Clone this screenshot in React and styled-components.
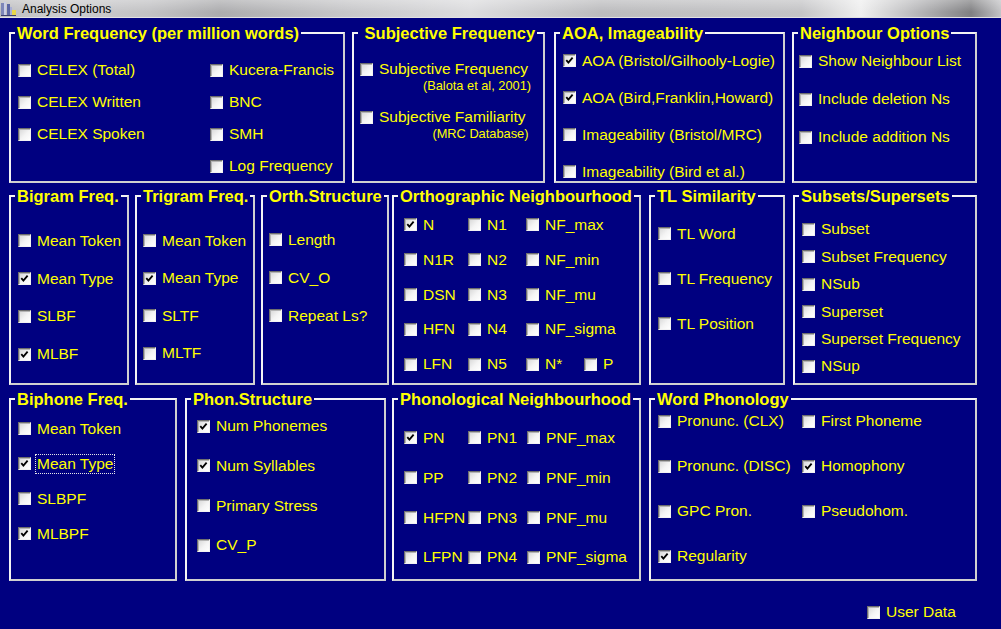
import React from 'react';
import styled, { createGlobalStyle } from 'styled-components';

const GlobalStyle = createGlobalStyle`
  html, body {
    margin: 0;
    padding: 0;
    background: #000080;
  }
  body {
    font-family: "Liberation Sans", Arial, sans-serif;
    overflow: hidden;
  }
  * { box-sizing: border-box; }
`;

const on = (label, extra) => ({ label, on: true, ...extra });

// left/width/margins follow the reference dialog, which is a fixed-size form
const rows = [
  {
    h: 151,
    mt: 14,
    groups: [
      { title: 'Word Frequency (per million words)', w: 336, ml: 0, pl: 7, first: 38, pitch: 32, cols: '192px auto',
        items: [['CELEX (Total)', 'Kucera-Francis'], ['CELEX Written', 'BNC'], ['CELEX Spoken', 'SMH'], [null, 'Log Frequency']] },
      { title: ' Subjective Frequency', w: 193, ml: 7, pl: 6, first: 44.5, pitch: 48,
        items: [
          { label: 'Subjective Frequency', sub: '(Balota et al, 2001)' },
          { label: 'Subjective Familiarity', sub: '(MRC Database)' },
        ] },
      { title: 'AOA, Imageability', w: 231, ml: 9, pl: 7, first: 28.5, pitch: 37,
        items: [on('AOA (Bristol/Gilhooly-Logie)'), on('AOA (Bird,Franklin,Howard)'), 'Imageability (Bristol/MRC)', 'Imageability (Bird et al.)'] },
      { title: 'Neighbour Options', w: 185, ml: 7, pl: 5, first: 29, pitch: 38,
        items: ['Show Neighbour List', 'Include deletion Ns', 'Include addition Ns'] },
    ],
  },
  {
    h: 190,
    mt: 12,
    groups: [
      { title: 'Bigram Freq.', w: 120, ml: 0, pl: 7, first: 46, pitch: 37.7,
        items: ['Mean Token', on('Mean Type'), 'SLBF', on('MLBF')] },
      { title: 'Trigram Freq.', w: 120, ml: 6, pl: 6, first: 46, pitch: 37.4,
        items: ['Mean Token', on('Mean Type'), 'SLTF', 'MLTF'] },
      { title: 'Orth.Structure', w: 128, ml: 6, pl: 6, first: 44.7, pitch: 38,
        items: ['Length', 'CV_O', 'Repeat Ls?'] },
      { title: 'Orthographic Neighbourhood', w: 249, ml: 3, pl: 10, first: 30, pitch: 34.8, cols: '64px 58px 58px auto',
        items: [
          [on('N'), 'N1', 'NF_max', null],
          ['N1R', 'N2', 'NF_min', null],
          ['DSN', 'N3', 'NF_mu', null],
          ['HFN', 'N4', 'NF_sigma', null],
          ['LFN', 'N5', 'N*', 'P'],
        ] },
      { title: 'TL Similarity', w: 136, ml: 8, pl: 7, first: 38.7, pitch: 45,
        items: ['TL Word', 'TL Frequency', 'TL Position'] },
      { title: 'Subsets/Supersets', w: 184, ml: 8, pl: 7, first: 34.5, pitch: 27.4,
        items: ['Subset', 'Subset Frequency', 'NSub', 'Superset', 'Superset Frequency', 'NSup'] },
    ],
  },
  {
    h: 183,
    mt: 13,
    groups: [
      { title: 'Biphone Freq.', w: 168, ml: 0, pl: 7, first: 30.7, pitch: 35,
        items: ['Mean Token', on('Mean Type', { focus: true }), 'SLBPF', on('MLBPF')] },
      { title: 'Phon.Structure', w: 201, ml: 8, pl: 10, first: 28.3, pitch: 39.7,
        items: [on('Num Phonemes'), on('Num Syllables'), 'Primary Stress', 'CV_P'] },
      { title: 'Phonological Neighbourhood', w: 249, ml: 6, pl: 10, first: 40, pitch: 39.8, cols: '64px 59px auto',
        items: [
          [on('PN'), 'PN1', 'PNF_max'],
          ['PP', 'PN2', 'PNF_min'],
          ['HFPN', 'PN3', 'PNF_mu'],
          ['LFPN', 'PN4', 'PNF_sigma'],
        ] },
      { title: 'Word Phonology', w: 328, ml: 8, pl: 7, first: 23.3, pitch: 45, cols: '144px auto',
        items: [
          ['Pronunc. (CLX)', 'First Phoneme'],
          ['Pronunc. (DISC)', on('Homophony')],
          ['GPC Pron.', 'Pseudohom.'],
          [on('Regularity'), null],
        ] },
    ],
  },
];

export default function App() {
  return (
    <>
      <GlobalStyle />
      <Dialog>
        <TitleBar>
          <AppIcon />
          <span>Analysis Options</span>
        </TitleBar>
        <Form>
          {rows.map((row, i) => (
            <GroupRow key={i} $mt={row.mt}>
              {row.groups.map((g) => (
                <Group key={g.title} $w={g.w} $h={row.h} $ml={g.ml}>
                  <Legend>{g.title}</Legend>
                  <Options
                    $mt={g.first - 10 - g.pitch / 2}
                    $pl={g.pl}
                    $pitch={g.pitch}
                    $cols={g.cols || 'auto'}
                  >
                    {g.items.flat().map((item, j) => (
                      <Choice key={j} item={item} />
                    ))}
                  </Options>
                </Group>
              ))}
            </GroupRow>
          ))}
          <Footer>
            <Choice item="User Data" />
          </Footer>
        </Form>
      </Dialog>
    </>
  );
}

function Choice({ item }) {
  if (!item) return <span />;
  const opt = typeof item === 'string' ? { label: item } : item;
  return (
    <Option>
      <Checkbox checked={opt.on} />
      {opt.sub ? (
        <Stack>
          <Caption>{opt.label}</Caption>
          <Note>{opt.sub}</Note>
        </Stack>
      ) : (
        <Caption $focus={opt.focus}>{opt.label}</Caption>
      )}
    </Option>
  );
}

function Checkbox({ checked }) {
  return (
    <Box>
      {checked && (
        <svg width="9" height="9" viewBox="0 0 9 9">
          <path d="M1.3 4.2 L3.4 6.6 L7.6 1.6" fill="none" stroke="#000" strokeWidth="1.8" />
        </svg>
      )}
    </Box>
  );
}

function AppIcon() {
  return (
    <svg width="18" height="16" viewBox="0 0 18 16">
      <rect x="1" y="2" width="3" height="13" fill="#7d86b8" />
      <rect x="4" y="1" width="2" height="14" fill="#c9cde6" />
      <rect x="7" y="3" width="3" height="12" fill="#5c66a4" />
      <rect x="10" y="6" width="2" height="9" fill="#aab0d6" />
      <rect x="12" y="9" width="4" height="6" fill="#e8d84a" />
      <rect x="1" y="14" width="15" height="1" fill="#3b3f6e" />
    </svg>
  );
}

const Dialog = styled.div`
  width: 1001px;
  height: 629px;
  background: #000080;
`;

const TitleBar = styled.header`
  height: 18px;
  display: flex;
  align-items: center;
  gap: 4px;
  border-bottom: 1px solid #e2e2e2;
  background:
    linear-gradient(180deg, rgba(255, 255, 255, 0.3) 0%, rgba(255, 255, 255, 0) 70%),
    linear-gradient(
      90deg,
      #bdbdbf 0%,
      #cdcdcf 6%,
      #c2c2c4 15%,
      #acacae 22%,
      #c6c6c8 34%,
      #dcdcde 47%,
      #bcbcbe 60%,
      #c4c4c6 80%,
      #efefef 86%,
      #bebec0 91%,
      #808082 97%,
      #c4c4c6 100%
    );
  color: #000;
  font: 12px "Liberation Sans", Arial, sans-serif;
`;

const Form = styled.main`
  padding-left: 9px;
`;

const GroupRow = styled.div`
  display: flex;
  align-items: flex-start;
  margin-top: ${(p) => p.$mt}px;
`;

const Group = styled.section`
  flex: none;
  width: ${(p) => p.$w}px;
  height: ${(p) => p.$h}px;
  margin-left: ${(p) => p.$ml}px;
  border: 2px solid #e4e4e4;
  border-color: #f4f4f4 #d0d0d0 #d0d0d0 #f4f4f4;
  display: flex;
  flex-direction: column;
`;

const Legend = styled.h3`
  align-self: flex-start;
  margin: -10px 0 0 4px;
  padding: 0 2px;
  background: #000080;
  color: #ffff00;
  font: bold 16.5px/18px "Liberation Sans", Arial, sans-serif;
  white-space: pre;
`;

const Options = styled.div`
  margin-top: ${(p) => p.$mt}px;
  padding-left: ${(p) => p.$pl}px;
  display: grid;
  grid-template-columns: ${(p) => p.$cols};
  grid-auto-rows: ${(p) => p.$pitch}px;
  align-items: center;
`;

const Option = styled.label`
  display: flex;
  align-items: flex-start;
  gap: 6px;
  color: #ffff00;
  font-size: 15.5px;
  line-height: 18px;
  white-space: nowrap;
`;

const Box = styled.span`
  flex: none;
  width: 13px;
  height: 13px;
  margin-top: 2.5px;
  display: flex;
  align-items: center;
  justify-content: center;
  border: 1px solid;
  border-color: #6e6e6e #f2f2f2 #f2f2f2 #6e6e6e;
  box-shadow: inset 1px 1px 0 #b4b4b4;
  background: linear-gradient(135deg, #d6d6d6 0%, #f4f4f4 55%, #ffffff 100%);
`;

const Caption = styled.span`
  padding: 0 1px;
  margin-left: -1px;
  outline: ${(p) => (p.$focus ? '1px dotted #e8e8e8' : 'none')};
`;

const Stack = styled.span`
  display: flex;
  flex-direction: column;
  align-items: flex-end;
`;

const Note = styled.span`
  font-size: 12.8px;
  line-height: 15px;
  margin-right: -2px;
`;

const Footer = styled.footer`
  display: flex;
  margin-top: 22px;
  padding-left: 858px;
`;
